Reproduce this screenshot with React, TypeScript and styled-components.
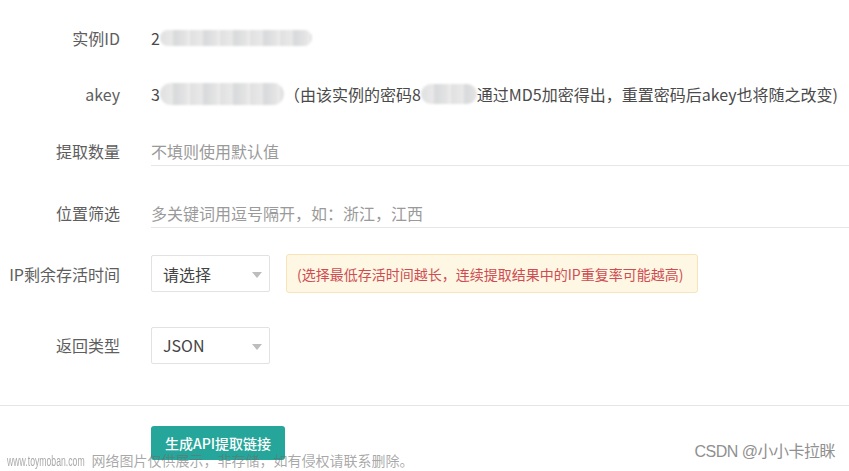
import React from 'react';
import styled, { createGlobalStyle } from 'styled-components';

const GlobalStyle = createGlobalStyle`
  html, body {
    margin: 0;
    padding: 0;
    background: #ffffff;
  }
  body {
    font-family: "Noto Sans CJK SC", "Microsoft YaHei", "Noto Sans", sans-serif;
  }
`;

const Page = styled.div`
  position: relative;
  width: 849px;
  height: 471px;
  overflow: hidden;
  padding-top: 10px;
  box-sizing: border-box;
`;

const Row = styled.div<{ $h: number }>`
  display: flex;
  align-items: center;
  height: ${(p) => p.$h}px;
`;

const Label = styled.div`
  width: 120px;
  flex-shrink: 0;
  text-align: right;
  font-size: 16px;
  color: #5e5e5e;
  white-space: nowrap;
`;

const Field = styled.div`
  flex: 1;
  min-width: 0;
  margin-left: 31px;
  display: flex;
  align-items: center;
  font-size: 16px;
  color: #4a4a4a;
  white-space: nowrap;
`;

const Blur = styled.span<{ $w: number; $h: number }>`
  display: inline-block;
  width: ${(p) => p.$w}px;
  height: ${(p) => p.$h}px;
  border-radius: ${(p) => p.$h / 2}px;
  background: repeating-linear-gradient(
    90deg,
    #e0e0e0 0px,
    #e9e9e9 12px,
    #d8d9db 14px,
    #e4e4e4 26px,
    #efefef 30px
  );
  filter: blur(1px);
  vertical-align: middle;
`;

const Input = styled.input`
  width: 100%;
  height: 29px;
  box-sizing: border-box;
  border: none;
  border-bottom: 1px solid #e6e6e6;
  padding: 0;
  outline: none;
  font-family: inherit;
  font-size: 16px;
  color: #333333;
  background: transparent;

  &::placeholder {
    color: #9a9a9a;
  }
`;

const Select = styled.div`
  position: relative;
  width: 119px;
  height: 37px;
  box-sizing: border-box;
  border: 1px solid #e2e2e2;
  border-radius: 2px;
  padding-left: 11px;
  display: flex;
  align-items: center;
  font-size: 16px;
  color: #444444;

  &::after {
    content: '';
    position: absolute;
    right: 7px;
    top: 16px;
    border-left: 5px solid transparent;
    border-right: 5px solid transparent;
    border-top: 6px solid #bdbdbd;
  }
`;

const Notice = styled.div`
  margin-left: 16px;
  height: 39px;
  box-sizing: border-box;
  padding: 0 14px 0 10px;
  display: flex;
  align-items: center;
  background: #fdf7e4;
  border: 1px solid #f7e4b9;
  border-radius: 3px;
  font-size: 14px;
  color: #cf4d52;
`;

const Divider = styled.div`
  margin-top: 16px;
  height: 1px;
  background: #e5e5e5;
`;

const Actions = styled.div`
  padding: 20px 0 0 151px;
`;

const PrimaryButton = styled.button`
  height: 34px;
  padding: 0 14px;
  border: none;
  border-radius: 3px;
  background: #26a69a;
  color: #ffffff;
  font-family: inherit;
  font-size: 14px;
  font-weight: 500;
  cursor: pointer;
`;

const SiteMark = styled.div`
  position: absolute;
  left: 7px;
  bottom: 1px;
  font-size: 14px;
  color: rgba(110, 110, 110, 0.6);
  white-space: nowrap;

  span {
    display: inline-block;
    font-family: "Liberation Sans", sans-serif;
    font-size: 14px;
    transform: scaleX(0.62);
    transform-origin: left center;
    margin-right: -44px;
  }
`;

const AuthorMark = styled.div`
  position: absolute;
  right: 14px;
  bottom: 9px;
  font-family: "Liberation Sans", "Noto Sans CJK SC", sans-serif;
  font-size: 16px;
  letter-spacing: -0.5px;
  color: #909090;
  text-shadow: 0 0 1px #ffffff, 0 0 2px #ffffff;
  white-space: nowrap;
`;

export default function App() {
  return (
    <Page>
      <GlobalStyle />
      <Row $h={56}>
        <Label>实例ID</Label>
        <Field>
          2<Blur $w={152} $h={16} />
        </Field>
      </Row>
      <Row $h={56}>
        <Label>akey</Label>
        <Field>
          3<Blur $w={124} $h={22} />
          （由该实例的密码8<Blur $w={56} $h={20} />
          通过MD5加密得出，重置密码后akey也将随之改变)
        </Field>
      </Row>
      <Row $h={58}>
        <Label>提取数量</Label>
        <Field>
          <Input placeholder="不填则使用默认值" />
        </Field>
      </Row>
      <Row $h={66}>
        <Label>位置筛选</Label>
        <Field>
          <Input placeholder="多关键词用逗号隔开，如：浙江，江西" />
        </Field>
      </Row>
      <Row $h={55}>
        <Label>IP剩余存活时间</Label>
        <Field>
          <Select>请选择</Select>
          <Notice>(选择最低存活时间越长，连续提取结果中的IP重复率可能越高)</Notice>
        </Field>
      </Row>
      <Row $h={88}>
        <Label>返回类型</Label>
        <Field>
          <Select>JSON</Select>
        </Field>
      </Row>
      <Divider />
      <Actions>
        <PrimaryButton>生成API提取链接</PrimaryButton>
      </Actions>
      <SiteMark>
        <span>www.toymoban.com</span> 网络图片仅供展示，非存储，如有侵权请联系删除。
      </SiteMark>
      <AuthorMark>CSDN @小小卡拉眯</AuthorMark>
    </Page>
  );
}
